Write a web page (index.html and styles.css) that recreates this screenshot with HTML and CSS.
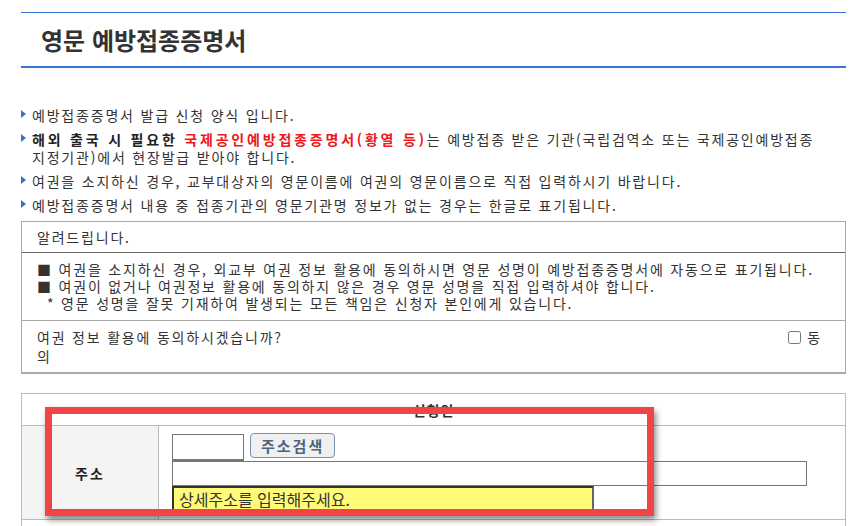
FILE: index.html
```html
<!DOCTYPE html>
<html lang="ko">

<head>
    <meta charset="UTF-8">
    <meta name="viewport" content="width=device-width, initial-scale=1.0">
    <title>영문 예방접종증명서</title>
    <link rel="stylesheet" href="styles.css">
</head>

<body>
    <div class="wrap">
        <div class="page-title">
            <h2>영문 예방접종증명서</h2>
        </div>

        <ul class="guide">
            <li>예방접종증명서 발급 신청 양식 입니다.</li>
            <li><b>해외 출국 시 필요한 <span class="red">국제공인예방접종증명서(황열 등)</span></b>는 예방접종 받은 기관(국립검역소 또는 국제공인예방접종 지정기관)에서 현장발급 받아야 합니다.</li>
            <li>여권을 소지하신 경우, 교부대상자의 영문이름에 여권의 영문이름으로 직접 입력하시기 바랍니다.</li>
            <li>예방접종증명서 내용 중 접종기관의 영문기관명 정보가 없는 경우는 한글로 표기됩니다.</li>
        </ul>

        <div class="notice">
            <div class="notice-head">알려드립니다.</div>
            <div class="notice-body">
                <p>■ 여권을 소지하신 경우, 외교부 여권 정보 활용에 동의하시면 영문 성명이 예방접종증명서에 자동으로 표기됩니다.</p>
                <p>■ 여권이 없거나 여권정보 활용에 동의하지 않은 경우 영문 성명을 직접 입력하셔야 합니다.</p>
                <p class="sub">* 영문 성명을 잘못 기재하여 발생되는 모든 책임은 신청자 본인에게 있습니다.</p>
            </div>
            <div class="notice-agree">
                <div class="agree-line">
                    <span>여권 정보 활용에 동의하시겠습니까?</span>
                    <label class="agree-chk"><input type="checkbox">동</label>
                </div>
                <div>의</div>
            </div>
        </div>

        <div class="form-box">
            <table class="form-table">
                <tr>
                    <th colspan="2" class="form-head">신청인</th>
                </tr>
                <tr>
                    <th class="label">주소</th>
                    <td class="field">
                        <div class="zip-row">
                            <input type="text" class="zip">
                            <button class="btn-search">주소검색</button>
                        </div>
                        <input type="text" class="addr">
                        <input type="text" class="addr-detail" value="상세주소를 입력해주세요.">
                    </td>
                </tr>
                <tr>
                    <td colspan="2" class="next-row"></td>
                </tr>
            </table>
            <div class="highlight"></div>
        </div>
    </div>
</body>

</html>
```

FILE: styles.css
```css
body {
    margin: 0;
    font-family: "Noto Sans CJK KR", "Noto Sans", sans-serif;
    color: #333;
    background-color: #fff;
    word-break: keep-all;
}

.wrap {
    margin: 0 16px 0 21px;
}

.page-title {
    margin-top: 12px;
    height: 53px;
    border-top: 1px solid #3a74d8;
    border-bottom: 2px solid #3a74d8;
    display: flex;
    align-items: center;
}

.page-title h2 {
    margin: 0 0 0 20px;
    font-size: 24px;
    line-height: 28px;
    color: #333;
    font-weight: bold;
}

.guide {
    list-style: none;
    margin: 38px 0 0;
    padding: 0;
}

.guide li {
    position: relative;
    padding-left: 11px;
    margin-bottom: 6px;
    font-size: 14px;
    line-height: 18px;
    letter-spacing: 1.8px;
    color: #333;
}

.guide li::before {
    content: "";
    position: absolute;
    left: 0;
    top: 4px;
    border-left: 5px solid #3c6fc0;
    border-top: 4px solid transparent;
    border-bottom: 4px solid transparent;
}

.guide b {
    color: #222;
    letter-spacing: 2.8px;
}

.red {
    color: #f01818;
}

.notice {
    margin-top: 7px;
    border: 1px solid #aaa;
    border-bottom: 2px solid #aaa;
    font-size: 14px;
    line-height: 18px;
    letter-spacing: 1.8px;
}

.notice-head {
    height: 30px;
    line-height: 30px;
    padding-left: 15px;
    border-bottom: 1px solid #666;
}

.notice-body {
    padding: 8px 15px 8px;
    border-bottom: 1px solid #aaa;
}

.notice-body p {
    margin: 0;
    line-height: 17px;
}

.notice-body .sub {
    padding-left: 10px;
}

.notice-agree {
    padding: 7px 15px 6px;
    line-height: 19px;
}

.agree-line {
    display: flex;
    justify-content: space-between;
}

.agree-chk {
    display: flex;
    align-items: center;
    margin-right: 8px;
}

.agree-chk input {
    margin: 0 6px 0 0;
    width: 13px;
    height: 13px;
}

.form-box {
    position: relative;
    margin-top: 19px;
}

.form-table {
    width: 100%;
    border-collapse: collapse;
    font-size: 14px;
}

.form-table th,
.form-table td {
    border: 1px solid #bbb;
    padding: 0;
}

.form-head {
    height: 31px;
    font-weight: bold;
    letter-spacing: 1px;
    color: #333;
}

.label {
    width: 136px;
    background-color: #f4f4f4;
    font-weight: bold;
    letter-spacing: 2px;
    color: #222;
}

.field {
    padding: 7px 13px 7px !important;
}

.zip-row {
    display: flex;
    align-items: flex-start;
    gap: 6px;
}

.field input {
    display: block;
    box-sizing: border-box;
    margin: 0;
    font-family: "Noto Sans CJK KR", sans-serif;
    font-size: 16px;
}

.zip {
    width: 72px;
    height: 27px;
    margin-top: 1px !important;
    border: 1px solid #777;
    border-bottom-width: 2px;
}

.btn-search {
    height: 25px;
    padding: 0 10px;
    border: 1px solid #7892b3;
    border-radius: 4px;
    background-color: #f0f0f0;
    color: #4d6480;
    font-family: "Noto Sans CJK KR", sans-serif;
    font-weight: bold;
    font-size: 15px;
    letter-spacing: 2px;
    line-height: 21px;
}

.addr {
    width: 635px;
    height: 25px;
    border: 1px solid #777;
}

.addr-detail {
    width: 422px;
    height: 26px;
    padding: 0 5px;
    border: 2px solid #333;
    border-right-color: #666;
    border-bottom-color: #666;
    background-color: #fffb78;
    color: #333;
    line-height: 22px;
}

.next-row {
    height: 10px;
    border-bottom: none !important;
}

.highlight {
    position: absolute;
    left: 24px;
    top: 14px;
    width: 609px;
    height: 109px;
    box-sizing: border-box;
    border: 7px solid #f24444;
    box-shadow: 2px 4px 6px rgba(0, 0, 0, 0.45);
}
```
